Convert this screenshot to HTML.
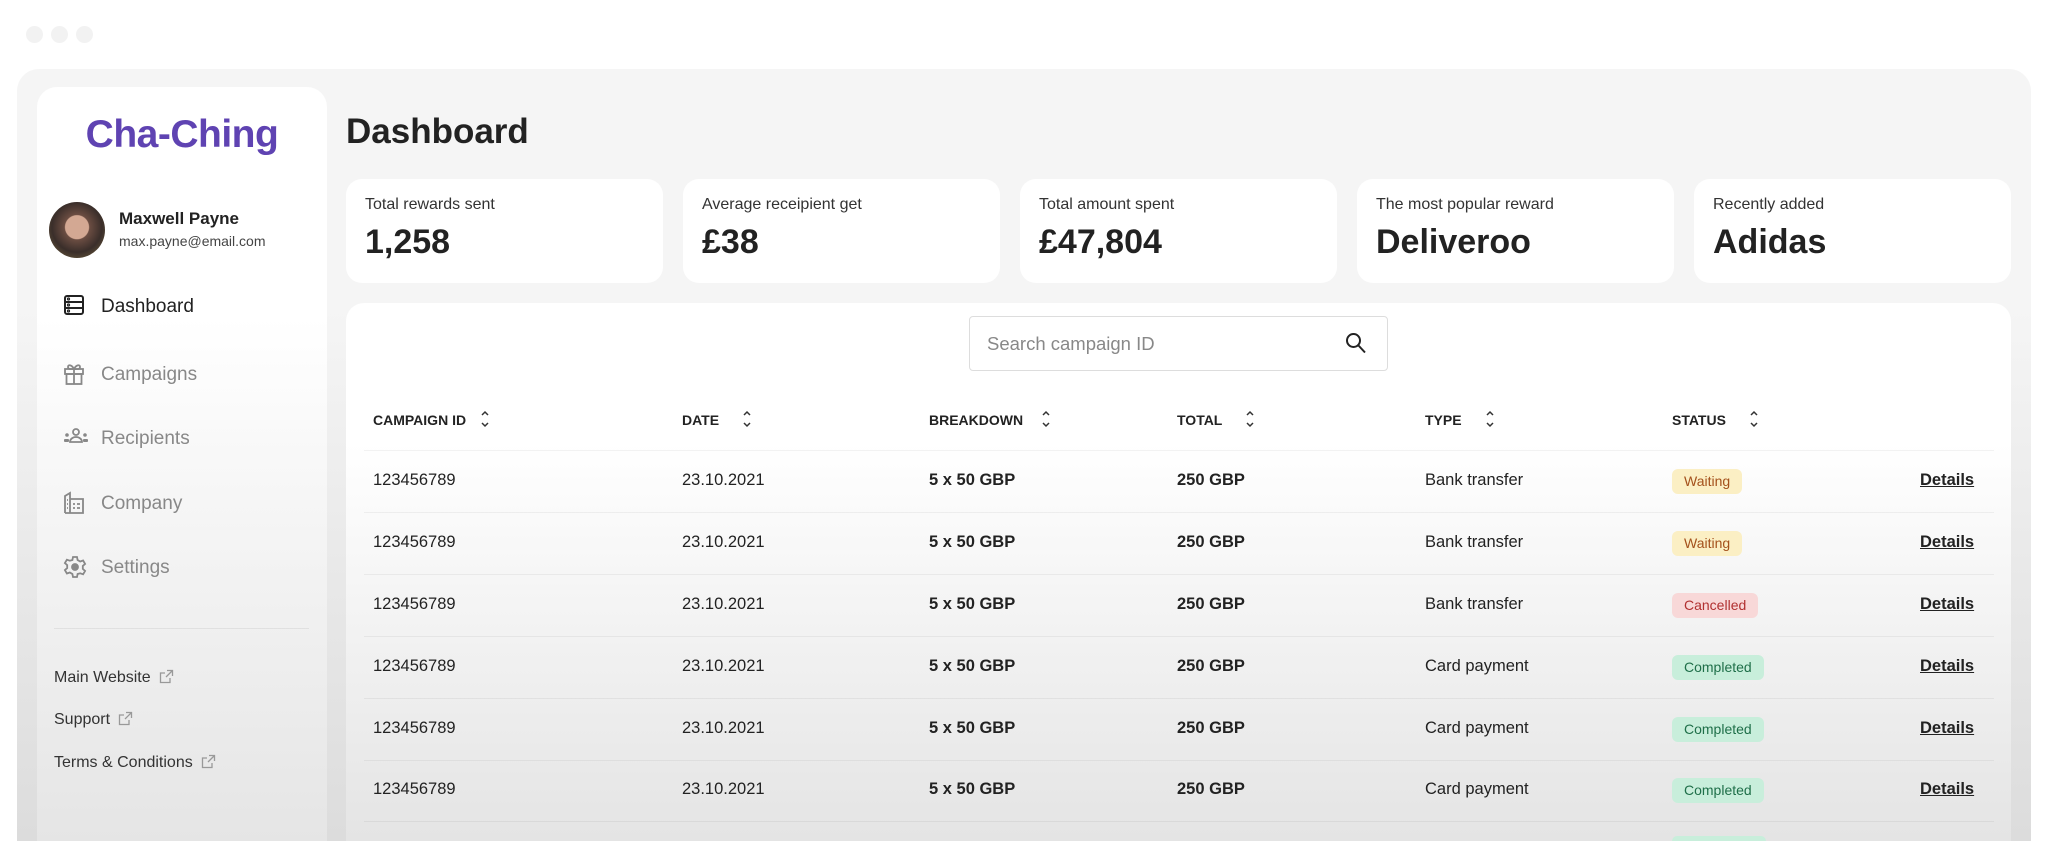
<!DOCTYPE html>
<html style="width:2048px;height:841px;overflow:hidden"><head><meta charset="utf-8">
<style>
*{margin:0;padding:0;box-sizing:border-box}
body{width:2048px;height:841px;overflow:hidden;background:#fff;font-family:"Liberation Sans",sans-serif;color:#222;position:relative}
.dot{position:absolute;top:26px;width:17px;height:17px;border-radius:50%;background:#f2f2f2}
.panel{position:absolute;left:17px;top:69px;width:2014px;height:772px;background:linear-gradient(to bottom,#f5f5f5 0,#f5f5f5 240px,#dcdcdc 100%);border-radius:22px 22px 0 0}
.side{position:absolute;left:37px;top:87px;width:290px;height:754px;background:linear-gradient(to bottom,#fff 0,#fff 230px,#e5e5e5 100%);border-radius:20px 20px 0 0}
.abs{position:absolute;white-space:nowrap}
.logo{left:0;width:290px;text-align:center;top:26px;font-size:39px;font-weight:bold;color:#5f43b2;letter-spacing:-0.5px}
.nav{font-size:19px;color:#888}
.nav svg{position:absolute;left:-38px;top:-2px}
.link{font-size:16px;color:#333}
.card{position:absolute;top:179px;width:317px;height:104px;background:#fff;border-radius:16px}
.card .l{position:absolute;left:19px;top:17px;font-size:16px;color:#333}
.card .v{position:absolute;left:19px;top:44px;font-size:34px;font-weight:bold;color:#222}
.table{position:absolute;left:346px;top:303px;width:1665px;height:538px;background:linear-gradient(to bottom,#fff 0,#fff 140px,#e4e4e4 100%);border-radius:18px 18px 0 0}
.th{position:absolute;top:412px;font-size:14px;font-weight:bold;color:#222}
.sort{position:absolute;top:409px}
.line{position:absolute;left:364px;width:1630px;height:1px;background:rgba(0,0,0,0.05)}
.td{position:absolute;font-size:16.5px;color:#222}
.b{font-weight:bold}
.badge{position:absolute;height:25px;line-height:25px;padding:0 12px;border-radius:6px;font-size:14px}
.w{background:#fbefc4;color:#a4511c}
.c{background:#f8d8d8;color:#b13030}
.g{background:#c8eedb;color:#1f6f49}
.det{position:absolute;left:1920px;font-size:16.5px;font-weight:bold;text-decoration:underline;color:#222}
</style></head><body>
<div class="dot" style="left:26px"></div><div class="dot" style="left:51px"></div><div class="dot" style="left:76px"></div>
<div class="panel"></div>
<div class="side">
  <div class="abs logo">Cha-Ching</div>
  <div class="abs" style="left:12px;top:115px;width:56px;height:56px;border-radius:50%;background:radial-gradient(circle at 50% 45%,#d3a893 0 28%,#6b4d42 30%,#3a2e2a 60%,#7a6a40 100%)"></div>
  <div class="abs" style="left:82px;top:122px;font-size:17px;font-weight:bold;color:#222">Maxwell Payne</div>
  <div class="abs" style="left:82px;top:146px;font-size:14px;color:#444">max.payne@email.com</div>
  <div class="abs nav" style="left:64px;top:209px;color:#222"><svg width="22" height="22" viewBox="0 0 22 22" fill="none" stroke="#222" stroke-width="2"><rect x="2" y="2" width="18" height="18" rx="2"/><path d="M2 8h18M2 14h18"/><circle cx="5.5" cy="5" r=".6"/><circle cx="5.5" cy="11" r=".6"/><circle cx="5.5" cy="17" r=".6"/></svg>Dashboard</div>
  <div class="abs nav" style="left:64px;top:277px"><svg width="22" height="24" viewBox="0 0 22 24" fill="none" stroke="#888" stroke-width="1.8"><rect x="2" y="7" width="18" height="5"/><rect x="3.5" y="12" width="15" height="10"/><path d="M11 7v15M11 7c-2-4-6-5-6-2s4 2 6 2c2 0 6 1 6-2s-4-2-6 2"/></svg>Campaigns</div>
  <div class="abs nav" style="left:64px;top:341px"><svg width="26" height="20" viewBox="0 0 26 20" fill="#888"><circle cx="13" cy="6" r="3" fill="none" stroke="#888" stroke-width="1.8"/><path d="M7 16c0-3 3-5 6-5s6 2 6 5z" fill="none" stroke="#888" stroke-width="1.8"/><circle cx="4" cy="9" r="1.8"/><rect x="1" y="13" width="5" height="3" rx="1"/><circle cx="22" cy="9" r="1.8"/><rect x="20" y="13" width="5" height="3" rx="1"/></svg>Recipients</div>
  <div class="abs nav" style="left:64px;top:406px"><svg width="22" height="24" viewBox="0 0 22 24" fill="none" stroke="#888" stroke-width="1.8"><path d="M2 22V5l5-3v20M7 8h13v14H2"/><path d="M10 13h2M14 13h3M10 17h2M14 17h3M4 9h1M4 13h1M4 17h1"/></svg>Company</div>
  <div class="abs nav" style="left:64px;top:470px"><svg width="24" height="24" viewBox="0 0 24 24" fill="none" stroke="#888" stroke-width="1.8"><path d="M10 2h4l.6 3 2.6 1.5 2.9-1 2 3.4-2.3 2v3l2.3 2-2 3.4-2.9-1L14.6 19 14 22h-4l-.6-3-2.6-1.5-2.9 1-2-3.4 2.3-2v-3l-2.3-2 2-3.4 2.9 1L9.4 5z"/><circle cx="12" cy="12" r="3" fill="#888"/></svg>Settings</div>
  <div class="abs" style="left:17px;top:541px;width:255px;height:1px;background:rgba(0,0,0,0.06)"></div>
  <div class="abs link" style="left:17px;top:582px">Main Website <svg width="15" height="15" viewBox="0 0 15 15" fill="none" stroke="#999" stroke-width="1.3" style="margin-left:4px;vertical-align:-2px"><path d="M8 1.5h5.5V7M13.5 1.5 7 8M11 9v4.5H1.5V4H6"/></svg></div>
  <div class="abs link" style="left:17px;top:624px">Support <svg width="15" height="15" viewBox="0 0 15 15" fill="none" stroke="#999" stroke-width="1.3" style="margin-left:4px;vertical-align:-2px"><path d="M8 1.5h5.5V7M13.5 1.5 7 8M11 9v4.5H1.5V4H6"/></svg></div>
  <div class="abs link" style="left:17px;top:667px">Terms &amp; Conditions <svg width="15" height="15" viewBox="0 0 15 15" fill="none" stroke="#999" stroke-width="1.3" style="margin-left:4px;vertical-align:-2px"><path d="M8 1.5h5.5V7M13.5 1.5 7 8M11 9v4.5H1.5V4H6"/></svg></div>
</div>

<div class="abs" style="left:346px;top:112px;font-size:35px;font-weight:bold;color:#222">Dashboard</div>
<div class="card" style="left:346px"><div class="l">Total rewards sent</div><div class="v">1,258</div></div>
<div class="card" style="left:683px"><div class="l">Average receipient get</div><div class="v">£38</div></div>
<div class="card" style="left:1020px"><div class="l">Total amount spent</div><div class="v">£47,804</div></div>
<div class="card" style="left:1357px"><div class="l">The most popular reward</div><div class="v">Deliveroo</div></div>
<div class="card" style="left:1694px"><div class="l">Recently added</div><div class="v">Adidas</div></div>

<div class="table"></div>
<div class="abs" style="left:969px;top:316px;width:419px;height:55px;border:1.5px solid #ddd;border-radius:4px;background:#fff"></div>
<div class="abs" style="left:987px;top:333px;font-size:18.5px;color:#888">Search campaign ID</div>
<svg class="abs" style="left:1345px;top:332px" width="22" height="22" viewBox="0 0 22 22" fill="none" stroke="#222" stroke-width="2"><circle cx="8.5" cy="8.5" r="6.5"/><path d="M13.5 13.5l6.5 7"/></svg>

<div class="th" style="left:373px">CAMPAIGN ID</div>
<div class="th" style="left:682px">DATE</div>
<div class="th" style="left:929px">BREAKDOWN</div>
<div class="th" style="left:1177px">TOTAL</div>
<div class="th" style="left:1425px">TYPE</div>
<div class="th" style="left:1672px">STATUS</div>
<svg class="sort" style="left:480px" width="10" height="20" viewBox="0 0 10 20" fill="none" stroke="#333" stroke-width="1.5"><path d="M2 6l3-3 3 3M2 14l3 3 3-3"/></svg>
<svg class="sort" style="left:742px" width="10" height="20" viewBox="0 0 10 20" fill="none" stroke="#333" stroke-width="1.5"><path d="M2 6l3-3 3 3M2 14l3 3 3-3"/></svg>
<svg class="sort" style="left:1041px" width="10" height="20" viewBox="0 0 10 20" fill="none" stroke="#333" stroke-width="1.5"><path d="M2 6l3-3 3 3M2 14l3 3 3-3"/></svg>
<svg class="sort" style="left:1245px" width="10" height="20" viewBox="0 0 10 20" fill="none" stroke="#333" stroke-width="1.5"><path d="M2 6l3-3 3 3M2 14l3 3 3-3"/></svg>
<svg class="sort" style="left:1485px" width="10" height="20" viewBox="0 0 10 20" fill="none" stroke="#333" stroke-width="1.5"><path d="M2 6l3-3 3 3M2 14l3 3 3-3"/></svg>
<svg class="sort" style="left:1749px" width="10" height="20" viewBox="0 0 10 20" fill="none" stroke="#333" stroke-width="1.5"><path d="M2 6l3-3 3 3M2 14l3 3 3-3"/></svg>

<div class="line" style="top:450px"></div><div class="line" style="top:512px"></div><div class="line" style="top:574px"></div><div class="line" style="top:636px"></div><div class="line" style="top:698px"></div><div class="line" style="top:760px"></div><div class="line" style="top:821px"></div>

<div class="td" style="left:373px;top:471px">123456789</div><div class="td" style="left:682px;top:471px">23.10.2021</div><div class="td b" style="left:929px;top:471px">5 x 50 GBP</div><div class="td b" style="left:1177px;top:471px">250 GBP</div><div class="td" style="left:1425px;top:471px">Bank transfer</div><div class="badge w" style="left:1672px;top:469px">Waiting</div><div class="det" style="top:471px">Details</div>
<div class="td" style="left:373px;top:533px">123456789</div><div class="td" style="left:682px;top:533px">23.10.2021</div><div class="td b" style="left:929px;top:533px">5 x 50 GBP</div><div class="td b" style="left:1177px;top:533px">250 GBP</div><div class="td" style="left:1425px;top:533px">Bank transfer</div><div class="badge w" style="left:1672px;top:531px">Waiting</div><div class="det" style="top:533px">Details</div>
<div class="td" style="left:373px;top:595px">123456789</div><div class="td" style="left:682px;top:595px">23.10.2021</div><div class="td b" style="left:929px;top:595px">5 x 50 GBP</div><div class="td b" style="left:1177px;top:595px">250 GBP</div><div class="td" style="left:1425px;top:595px">Bank transfer</div><div class="badge c" style="left:1672px;top:593px">Cancelled</div><div class="det" style="top:595px">Details</div>
<div class="td" style="left:373px;top:657px">123456789</div><div class="td" style="left:682px;top:657px">23.10.2021</div><div class="td b" style="left:929px;top:657px">5 x 50 GBP</div><div class="td b" style="left:1177px;top:657px">250 GBP</div><div class="td" style="left:1425px;top:657px">Card payment</div><div class="badge g" style="left:1672px;top:655px">Completed</div><div class="det" style="top:657px">Details</div>
<div class="td" style="left:373px;top:719px">123456789</div><div class="td" style="left:682px;top:719px">23.10.2021</div><div class="td b" style="left:929px;top:719px">5 x 50 GBP</div><div class="td b" style="left:1177px;top:719px">250 GBP</div><div class="td" style="left:1425px;top:719px">Card payment</div><div class="badge g" style="left:1672px;top:717px">Completed</div><div class="det" style="top:719px">Details</div>
<div class="td" style="left:373px;top:780px">123456789</div><div class="td" style="left:682px;top:780px">23.10.2021</div><div class="td b" style="left:929px;top:780px">5 x 50 GBP</div><div class="td b" style="left:1177px;top:780px">250 GBP</div><div class="td" style="left:1425px;top:780px">Card payment</div><div class="badge g" style="left:1672px;top:778px">Completed</div><div class="det" style="top:780px">Details</div>
<div class="badge g" style="left:1672px;top:836px;width:94px;height:5px;border-radius:6px 6px 0 0"></div>
</body></html>
